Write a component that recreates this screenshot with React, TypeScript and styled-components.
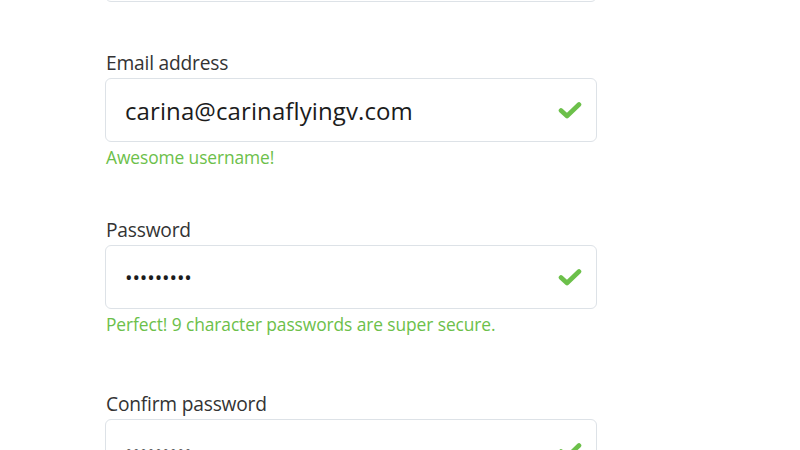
import React from "react";
import styled, { createGlobalStyle } from "styled-components";

const Global = createGlobalStyle`
  html, body { margin: 0; padding: 0; background: #ffffff; }
  body { font-family: "Open Sans", "Noto Sans", sans-serif; overflow: hidden; }
`;

const Page = styled.div`
  width: 800px;
  height: 450px;
  overflow: hidden;
  padding-left: 105px;
  box-sizing: border-box;
`;

const Column = styled.div`
  width: 492px;
  display: flex;
  flex-direction: column;
  margin-top: -62px;
`;

const Field = styled.div<{ $gap: number }>`
  display: flex;
  flex-direction: column;
  margin-top: ${(p) => p.$gap}px;
`;

const Label = styled.label`
  font-size: 19.2px;
  line-height: 22px;
  color: #333333;
  margin: 0 0 4px 1px;
  letter-spacing: -0.2px;
`;

const Box = styled.div`
  height: 64px;
  box-sizing: border-box;
  border: 1px solid #dde2e7;
  border-radius: 6px;
  display: flex;
  align-items: center;
  padding: 0 14px 0 19px;
  background: #fff;
`;

const Input = styled.input<{ $secret?: boolean }>`
  flex: 1;
  min-width: 0;
  border: none;
  outline: none;
  background: transparent;
  padding: 0;
  font-family: "Open Sans", "Noto Sans", sans-serif;
  font-size: ${(p) => (p.$secret ? "20px" : "24px")};
  letter-spacing: ${(p) => (p.$secret ? "-0.1px" : "0.1px")};
  color: #1c1c1c;
`;

const Helper = styled.div`
  font-size: 17.4px;
  line-height: 22px;
  color: #6cc04a;
  margin: 4px 0 0 1px;
  letter-spacing: -0.1px;
`;

const Check = () => (
  <svg width="24" height="18" viewBox="0 0 24 18" aria-hidden="true">
    <polyline
      points="3,9.5 9,15 21,3.5"
      fill="none"
      stroke="#6cc04a"
      strokeWidth="4.6"
      strokeLinecap="round"
      strokeLinejoin="round"
    />
  </svg>
);

export default function App() {
  return (
    <>
      <Global />
      <Page>
        <Column>
          <Box />
          <Field $gap={50}>
            <Label>Email address</Label>
            <Box>
              <Input readOnly defaultValue="carina@carinaflyingv.com" />
              <Check />
            </Box>
            <Helper>Awesome username!</Helper>
          </Field>
          <Field $gap={51}>
            <Label>Password</Label>
            <Box>
              <Input $secret readOnly type="password" defaultValue="123456789" />
              <Check />
            </Box>
            <Helper>Perfect! 9 character passwords are super secure.</Helper>
          </Field>
          <Field $gap={58}>
            <Label>Confirm password</Label>
            <Box>
              <Input $secret readOnly type="password" defaultValue="123456789" />
              <Check />
            </Box>
          </Field>
        </Column>
      </Page>
    </>
  );
}
